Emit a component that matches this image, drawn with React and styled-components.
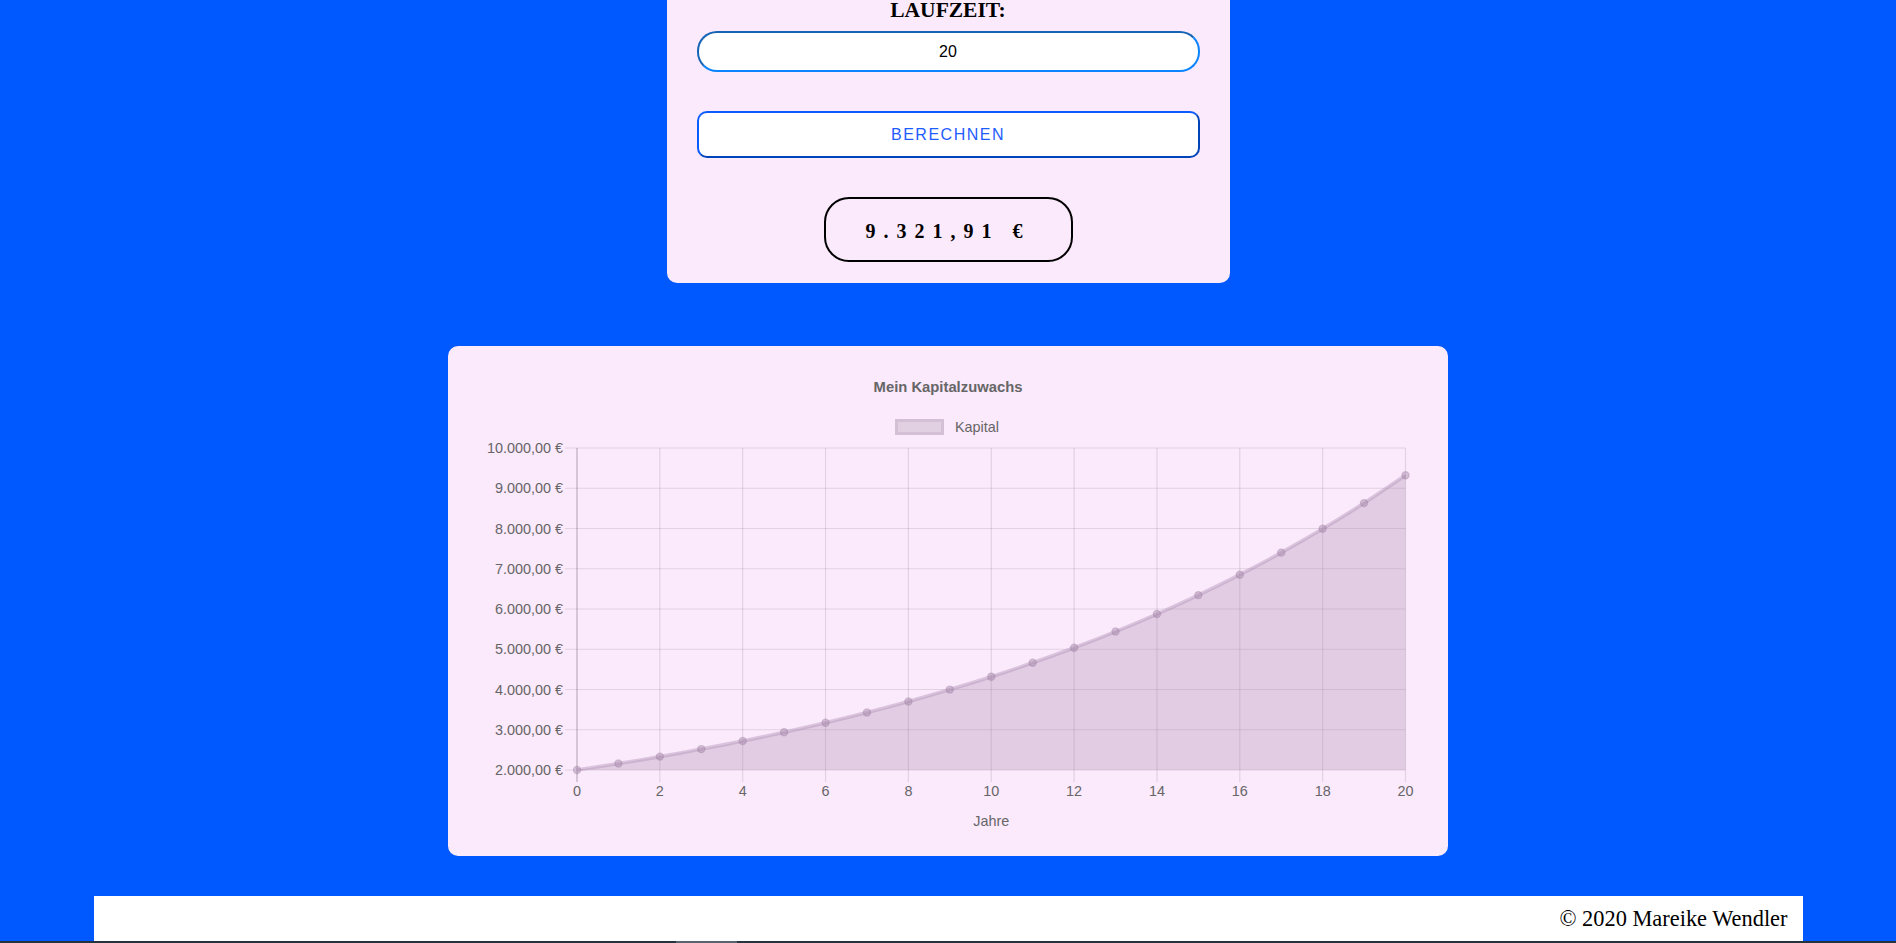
import React from 'react';
import styled, { createGlobalStyle } from 'styled-components';

const GlobalStyle = createGlobalStyle`
  html, body {
    margin: 0;
    padding: 0;
    background: #0059ff;
    overflow: hidden;
  }
`;

const Page = styled.div`
  height: 943px;
  display: flex;
  flex-direction: column;
  align-items: center;
`;

const Card = styled.section`
  width: 563px;
  box-sizing: border-box;
  padding: 0 30px 21px;
  background: #fbe9fc;
  border-radius: 0 0 10px 10px;
  display: flex;
  flex-direction: column;
  align-items: center;
`;

const Label = styled.label`
  display: block;
  font-family: "Liberation Serif", serif;
  font-weight: bold;
  font-size: 21.5px;
  line-height: 21px;
  margin-bottom: 10px;
  color: #000;
`;

const Input = styled.input`
  width: 100%;
  height: 41px;
  box-sizing: border-box;
  border: 2px solid;
  border-color: #1463b4 #0a84ff #0a84ff #1463b4;
  border-radius: 20px;
  background: #fff;
  text-align: center;
  font-family: "Liberation Sans", Arial, sans-serif;
  font-size: 16px;
  color: #000;
  outline: none;
`;

const Button = styled.button`
  width: 100%;
  height: 47px;
  margin-top: 39px;
  box-sizing: border-box;
  border: 2px solid;
  border-color: #0b5cff #0044b8 #0044b8 #0b5cff;
  border-radius: 10px;
  background: #fff;
  color: #1f5cff;
  font-family: "Liberation Sans", Arial, sans-serif;
  font-size: 16px;
  letter-spacing: 1.5px;
  cursor: pointer;
`;

const Result = styled.div`
  width: 249px;
  height: 65px;
  margin-top: 39px;
  padding-top: 3px;
  box-sizing: border-box;
  border: 2px solid #000;
  border-radius: 25px;
  display: flex;
  align-items: center;
  justify-content: center;
  font-family: "Liberation Serif", serif;
  font-weight: bold;
  font-size: 20px;
  letter-spacing: 8px;
  color: #000;
`;

const ChartCard = styled.section`
  width: 1000px;
  height: 510px;
  margin-top: 63px;
  background: #fbe9fc;
  border-radius: 10px;
  overflow: hidden;
  svg { display: block; }
`;

const Footer = styled.footer`
  width: 1709px;
  height: 45px;
  margin-top: 40px;
  box-sizing: border-box;
  padding-right: 15px;
  background: #fff;
  text-align: right;
  font-family: "Liberation Serif", serif;
  font-size: 22.4px;
  line-height: 45px;
  color: #000;
`;

const BottomBar = styled.div`
  align-self: stretch;
  height: 2px;
  background: #233440;
  display: flex;
`;

const Thumb = styled.div`
  margin-left: 676px;
  width: 61px;
  background: #556470;
`;

const X0 = 129, X1 = 957.5, Y0 = 102, Y1 = 424;
const values = Array.from({ length: 21 }, (_, i) => 2000 * Math.pow(1.08, i));
const xAt = (i) => X0 + ((X1 - X0) * i) / 20;
const yAt = (v) => Y1 - ((v - 2000) * (Y1 - Y0)) / 8000;

const spline = (prev, cur, next, t) => {
  const d01 = Math.hypot(cur.x - prev.x, cur.y - prev.y);
  const d12 = Math.hypot(next.x - cur.x, next.y - cur.y);
  const s01 = d01 + d12 ? d01 / (d01 + d12) : 0;
  const s12 = d01 + d12 ? d12 / (d01 + d12) : 0;
  return {
    prev: { x: cur.x - t * s01 * (next.x - prev.x), y: cur.y - t * s01 * (next.y - prev.y) },
    next: { x: cur.x + t * s12 * (next.x - prev.x), y: cur.y + t * s12 * (next.y - prev.y) },
  };
};

const euro = (v) => v.toLocaleString('de-DE', { minimumFractionDigits: 2, maximumFractionDigits: 2 }) + ' €';

const Chart = () => {
  const pts = values.map((v, i) => ({ x: xAt(i), y: yAt(v) }));
  const ctl = pts.map((p, i) => spline(pts[i - 1] || p, p, pts[i + 1] || p, 0.4));
  let d = `M${pts[0].x},${pts[0].y}`;
  for (let i = 1; i < pts.length; i++) {
    d += ` C${ctl[i - 1].next.x},${ctl[i - 1].next.y} ${ctl[i].prev.x},${ctl[i].prev.y} ${pts[i].x},${pts[i].y}`;
  }
  const fill = `${d} L${X1},${Y1} L${X0},${Y1} Z`;
  const yTicks = [10000, 9000, 8000, 7000, 6000, 5000, 4000, 3000, 2000];
  const xTicks = Array.from({ length: 11 }, (_, i) => i * 2);
  const font = '"Liberation Sans", Arial, sans-serif';

  return (
    <svg width="1000" height="510" viewBox="0 0 1000 510">
      <text x="500" y="46" textAnchor="middle" fontFamily={font} fontSize="14.8" fontWeight="bold" fill="#666">
        Mein Kapitalzuwachs
      </text>
      <rect x="448.5" y="74.5" width="46" height="13" fill="#e0d0e2" stroke="#d3bfd6" strokeWidth="3" />
      <text x="507" y="86" fontFamily={font} fontSize="14.4" fill="#666">Kapital</text>

      {yTicks.map((v) => (
        <g key={v}>
          <line x1={X0 - 12} x2={X1} y1={yAt(v)} y2={yAt(v)} stroke="rgba(0,0,0,0.1)" strokeWidth="1.2" />
          <text x="115" y={yAt(v) + 5} textAnchor="end" fontFamily={font} fontSize="14.4" fill="#666">
            {euro(v)}
          </text>
        </g>
      ))}
      {xTicks.map((t) => (
        <g key={t}>
          <line
            x1={xAt(t)}
            x2={xAt(t)}
            y1={Y0}
            y2={Y1 + 12}
            stroke={t === 0 ? 'rgba(0,0,0,0.25)' : 'rgba(0,0,0,0.1)'}
            strokeWidth="1.2"
          />
          <text x={xAt(t)} y="450" textAnchor="middle" fontFamily={font} fontSize="14.4" fill="#666">
            {t}
          </text>
        </g>
      ))}
      <text x={(X0 + X1) / 2} y="480" textAnchor="middle" fontFamily={font} fontSize="14.4" fill="#666">
        Jahre
      </text>

      <path d={fill} fill="rgba(160,130,165,0.28)" />
      <path d={d} fill="none" stroke="rgba(170,140,175,0.4)" strokeWidth="3.6" />
      {pts.map((p, i) => (
        <circle key={i} cx={p.x} cy={p.y} r="3.6" fill="rgba(160,130,165,0.4)" stroke="rgba(150,120,155,0.35)" strokeWidth="1.2" />
      ))}
    </svg>
  );
};

const App = () => (
  <>
    <GlobalStyle />
    <Page>
      <Card>
        <Label htmlFor="laufzeit">LAUFZEIT:</Label>
        <Input id="laufzeit" type="text" defaultValue="20" />
        <Button type="button">BERECHNEN</Button>
        <Result>9.321,91 €</Result>
      </Card>
      <ChartCard>
        <Chart />
      </ChartCard>
      <Footer>© 2020 Mareike Wendler</Footer>
      <BottomBar>
        <Thumb />
      </BottomBar>
    </Page>
  </>
);

export default App;
